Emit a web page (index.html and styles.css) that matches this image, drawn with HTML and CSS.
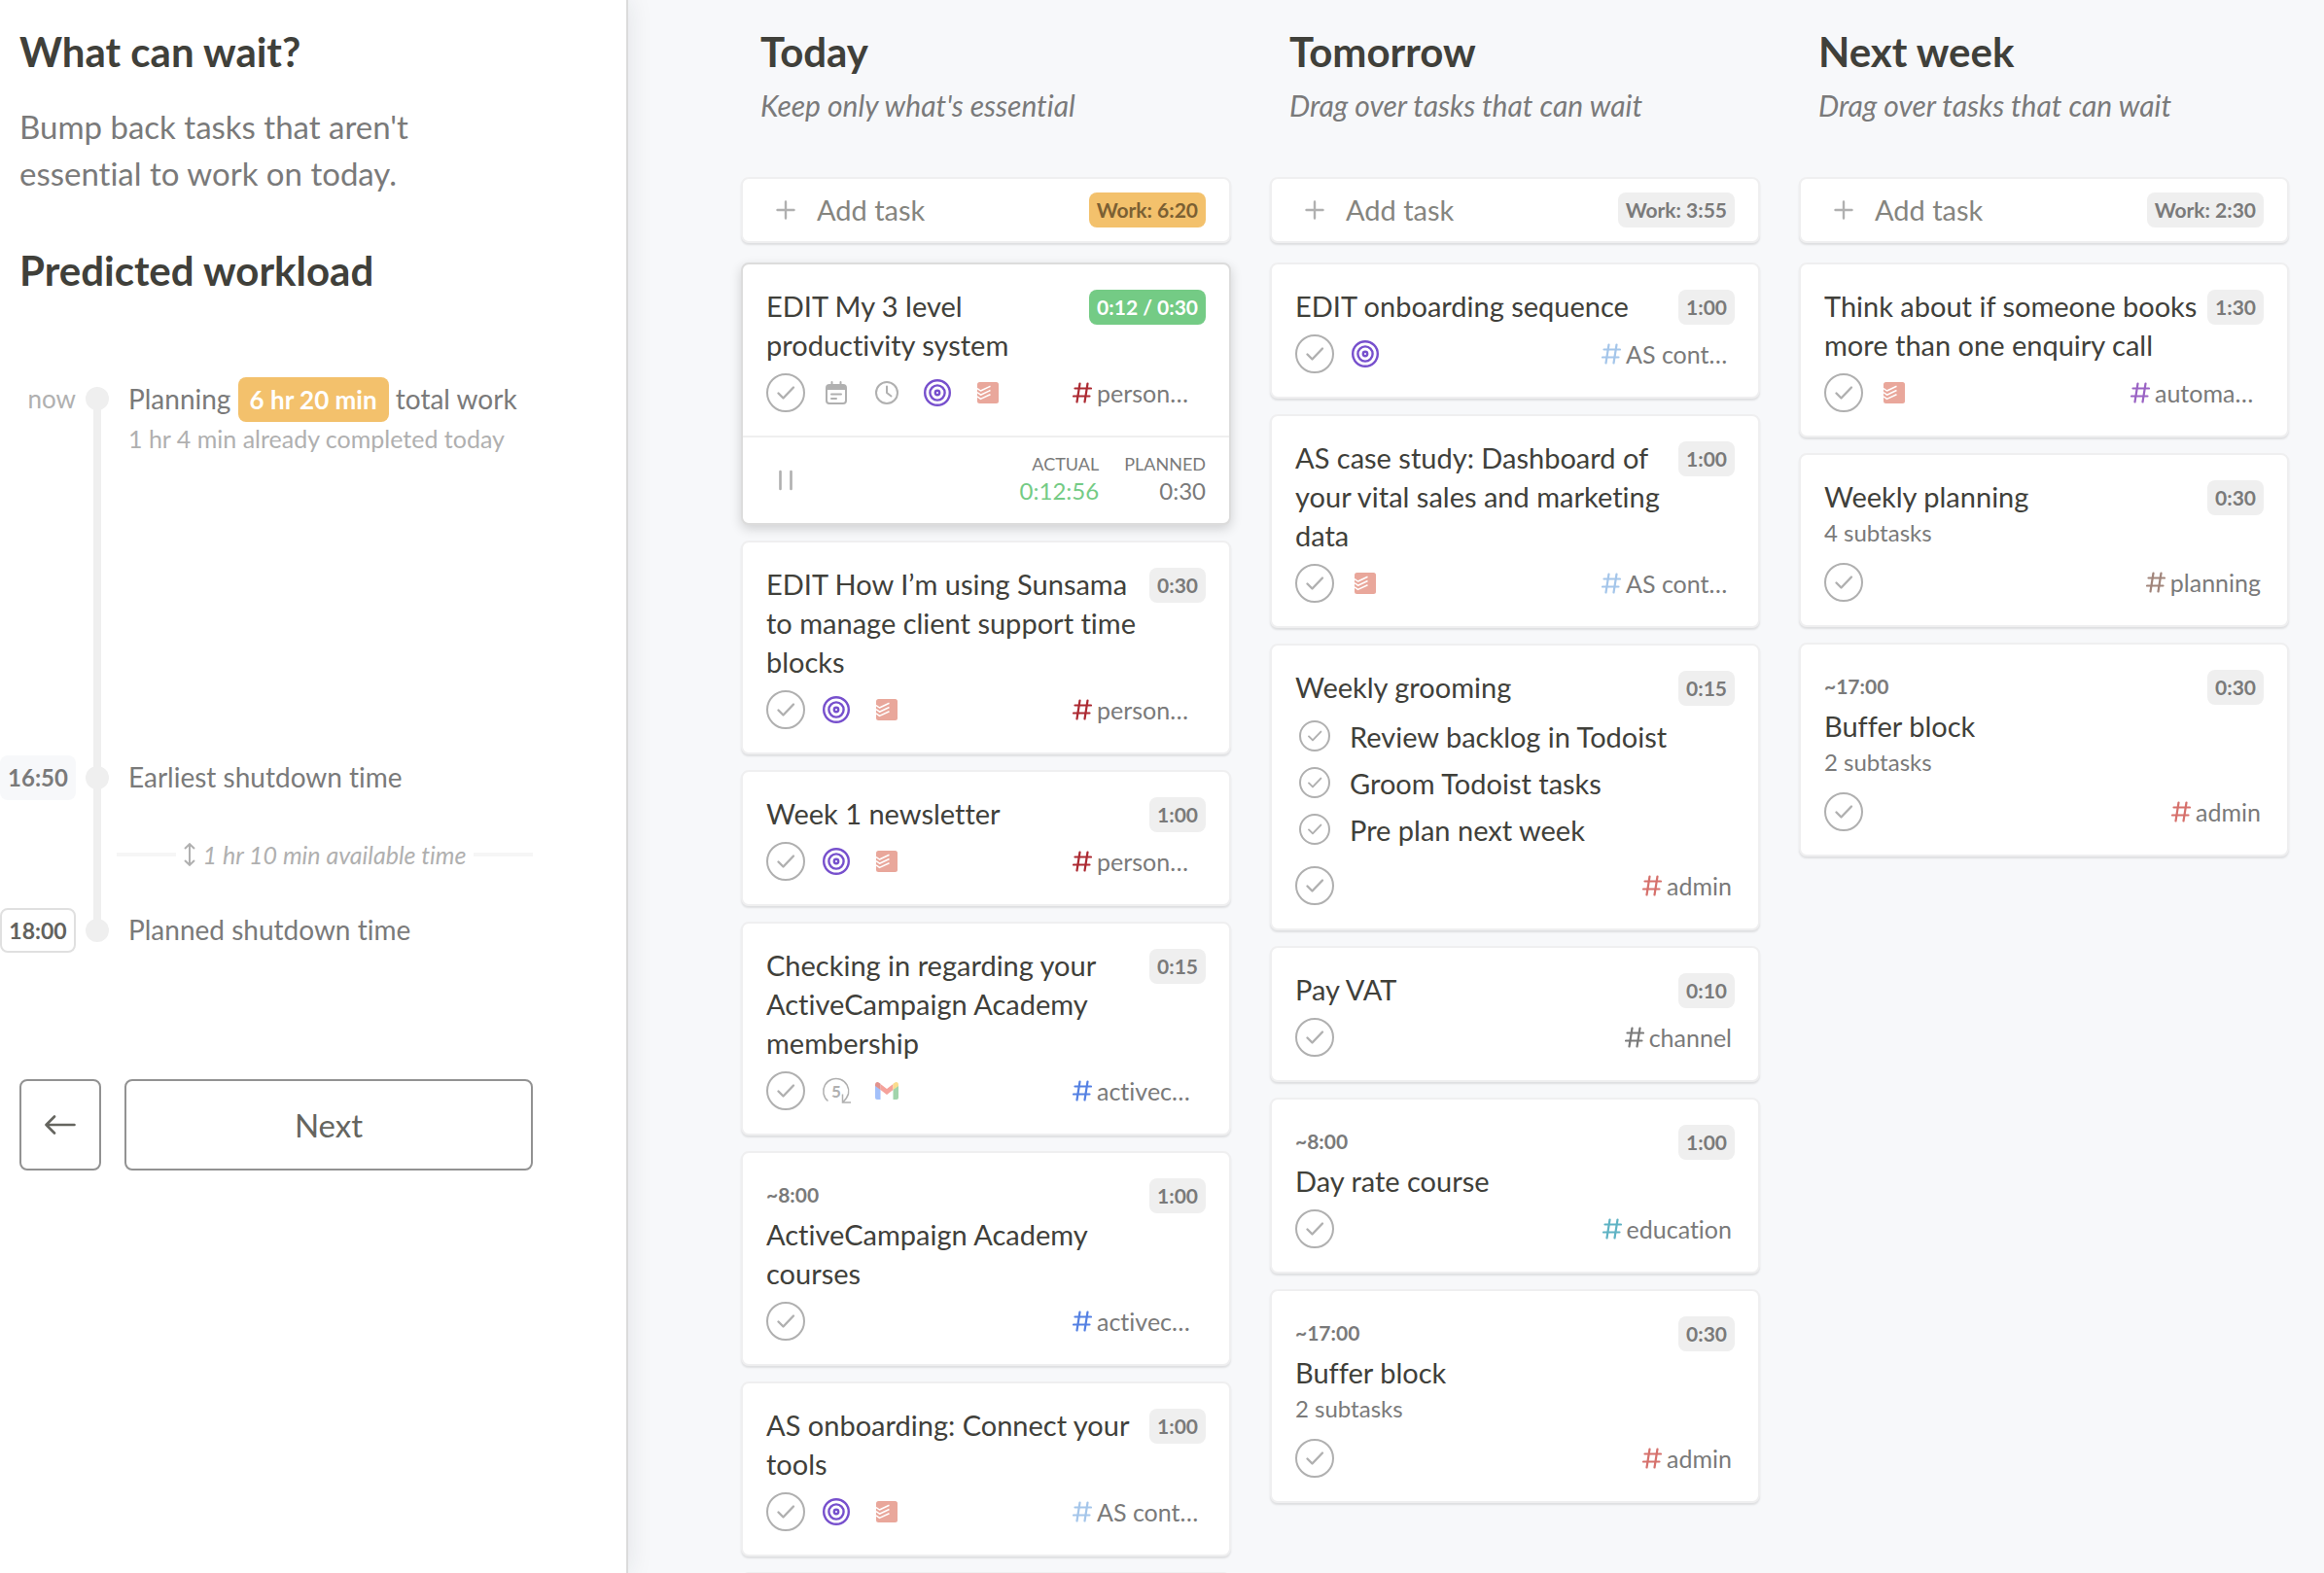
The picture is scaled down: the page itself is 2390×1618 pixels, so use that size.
FILE: index.html
```html
<!DOCTYPE html>
<html lang="en">
<head>
<meta charset="utf-8">
<title>Plan your day</title>
<link rel="stylesheet" href="styles.css">
</head>
<body>
<svg class="sprite" aria-hidden="true">
  <symbol id="i-check" viewBox="0 0 40 40"><path d="M12.500 20.500 17.500 25.500 28 14.500" fill="none" stroke="currentColor" stroke-width="2.400" stroke-linecap="round" stroke-linejoin="round"/></symbol>
  <symbol id="i-calendar" viewBox="0 0 22 24"><path d="M6.500 1v4M15.500 1v4" stroke="currentColor" stroke-width="2" stroke-linecap="round"/><rect x="1" y="4" width="20" height="19" rx="3" fill="none" stroke="currentColor" stroke-width="2"/><path d="M1 6.500Q1 4 3.500 4h15Q21 4 21 6.500V9H1z" fill="currentColor"/><path d="M6 13.500h10M6 18h5" stroke="currentColor" stroke-width="2" stroke-linecap="round"/></symbol>
  <symbol id="i-clock" viewBox="0 0 24 24"><circle cx="12" cy="12" r="11" fill="none" stroke="currentColor" stroke-width="2"/><path d="M12 5.500V12l4.500 3.500" fill="none" stroke="currentColor" stroke-width="2" stroke-linecap="round" stroke-linejoin="round"/></symbol>
  <symbol id="i-target" viewBox="0 0 28 28"><g fill="none" stroke="currentColor"><circle cx="14" cy="14" r="12.800" stroke-width="2.400"/><circle cx="14" cy="14" r="7.600" stroke-width="2.400"/><circle cx="14" cy="14" r="2.200" stroke-width="2.400"/></g></symbol>
  <symbol id="i-todoist" viewBox="0 0 22 22"><rect width="22" height="22" rx="2.500" fill="currentColor"/><g fill="none" stroke="#fff" stroke-width="1.500" stroke-linejoin="round"><path d="M0 6.500 3.500 9 13.500 4.300"/><path d="M0 10.700 3.500 13.200 13.500 8.500"/><path d="M0 14.900 3.500 17.400 13.500 12.700"/></g></symbol>
  <symbol id="i-gmail" viewBox="0 0 24 18"><path d="M0 3.500 5.500 7.500V18H2Q0 18 0 16z" fill="#a3c0fa"/><path d="M24 3.500 18.500 7.500V18H22Q24 18 24 16z" fill="#a1d4ab"/><path d="M5.500 2 12 7 18.500 2V8L12 13 5.500 8z" fill="#f5a29b"/><path d="M0 3Q0 0 2.500 0 3.500 0 5.500 1.800V8L0 4z" fill="#e1928d"/><path d="M24 3Q24 0 21.500 0 20.500 0 18.500 1.800V8L24 4z" fill="#fbdc8d"/></symbol>
  <symbol id="i-rollover" viewBox="0 0 30 30"><path d="M6.500 25.500A13 13 0 1 1 27.500 18Q26.500 22 22 26.500M21.500 18.500V27H30" fill="none" stroke="currentColor" stroke-width="1.500"/></symbol>
  <symbol id="i-hash" viewBox="0 0 20 22"><path d="M7.500 1.500 4.500 20.500M15.500 1.500 12.500 20.500M2.500 6.500H19M1 14.500H17.500" fill="none" stroke="currentColor" stroke-width="2.200" stroke-linecap="round"/></symbol>
  <symbol id="i-plus" viewBox="0 0 20 20"><path d="M10 1.500v17M1.500 10h17" stroke="currentColor" stroke-width="2.400" stroke-linecap="round"/></symbol>
  <symbol id="i-pause" viewBox="0 0 16 24"><path d="M2.500 3v18M13.500 3v18" stroke="currentColor" stroke-width="2.600" stroke-linecap="round"/></symbol>
  <symbol id="i-back" viewBox="0 0 32 20"><path d="M10 1.500 1.500 10l8.500 8.500M1.500 10h29" fill="none" stroke="currentColor" stroke-width="2.600" stroke-linecap="round" stroke-linejoin="round"/></symbol>
  <symbol id="i-updown" viewBox="0 0 12 24"><path d="M6 1.500v21M1 6 6 1.200 11 6M1 18l5 4.800L11 18" fill="none" stroke="currentColor" stroke-width="2"/></symbol>
</svg>

<div class="layout">
  <aside class="sidebar">
    <h1 class="heading">What can wait?</h1>
    <p class="lead">Bump back tasks that aren't<br>essential to work on today.</p>
    <h2 class="heading workload-heading">Predicted workload</h2>

    <ol class="timeline">
      <li class="stop stop-now">
        <span class="stop-time">now</span>
        <span class="dot"></span>
        <div class="stop-text">
          <p class="stop-plan">Planning <strong class="total">6 hr 20 min</strong> total work</p>
          <p class="stop-note">1 hr 4 min already completed today</p>
        </div>
      </li>
      <li class="stop">
        <span class="stop-time time-chip">16:50</span>
        <span class="dot"></span>
        <p class="stop-text stop-line">Earliest shutdown time</p>
      </li>
      <li class="available"><svg class="updown"><use href="#i-updown"/></svg><em>1 hr 10 min available time</em></li>
      <li class="stop">
        <button class="time-button" type="button">18:00</button>
        <span class="dot"></span>
        <p class="stop-text stop-line">Planned shutdown time</p>
      </li>
    </ol>

    <div class="actions">
      <button class="btn btn-back" type="button" aria-label="Back"><svg><use href="#i-back"/></svg></button>
      <button class="btn btn-next" type="button">Next</button>
    </div>
  </aside>

  <main class="board">
    <section class="column">
      <h2 class="heading column-heading">Today</h2>
      <p class="column-hint">Keep only what's essential</p>
      <button class="add-task" type="button"><svg><use href="#i-plus"/></svg><span class="add-label">Add task</span><span class="badge badge-over">Work: 6:20</span></button>

      <div class="cards">
        <article class="card card-active">
          <div class="card-body">
            <div class="card-top"><h3 class="title">EDIT My 3 level productivity system</h3><span class="badge badge-running">0:12 / 0:30</span></div>
            <div class="card-row">
              <label class="check"><input type="checkbox" aria-label="Complete EDIT My 3 level productivity system"><svg><use href="#i-check"/></svg></label>
              <span class="icon"><svg class="calendar"><use href="#i-calendar"/></svg></span>
              <span class="icon"><svg class="clock"><use href="#i-clock"/></svg></span>
              <span class="icon"><svg class="target"><use href="#i-target"/></svg></span>
              <span class="icon"><svg class="todoist"><use href="#i-todoist"/></svg></span>
              <span class="channel clipped"><svg class="hash crimson"><use href="#i-hash"/></svg><span>person…</span></span>
            </div>
          </div>
          <div class="timer">
            <button class="pause" type="button" aria-label="Pause"><svg><use href="#i-pause"/></svg></button>
            <dl class="timer-values">
              <div><dt>ACTUAL</dt><dd class="running">0:12:56</dd></div>
              <div><dt>PLANNED</dt><dd>0:30</dd></div>
            </dl>
          </div>
        </article>

        <article class="card">
          <div class="card-body">
            <div class="card-top"><h3 class="title">EDIT How I’m using Sunsama to manage client support time blocks</h3><span class="badge">0:30</span></div>
            <div class="card-row">
              <label class="check"><input type="checkbox" aria-label="Complete EDIT How I’m using Sunsama"><svg><use href="#i-check"/></svg></label>
              <span class="icon"><svg class="target"><use href="#i-target"/></svg></span>
              <span class="icon"><svg class="todoist"><use href="#i-todoist"/></svg></span>
              <span class="channel clipped"><svg class="hash crimson"><use href="#i-hash"/></svg><span>person…</span></span>
            </div>
          </div>
        </article>

        <article class="card">
          <div class="card-body">
            <div class="card-top"><h3 class="title">Week 1 newsletter</h3><span class="badge">1:00</span></div>
            <div class="card-row">
              <label class="check"><input type="checkbox" aria-label="Complete Week 1 newsletter"><svg><use href="#i-check"/></svg></label>
              <span class="icon"><svg class="target"><use href="#i-target"/></svg></span>
              <span class="icon"><svg class="todoist"><use href="#i-todoist"/></svg></span>
              <span class="channel clipped"><svg class="hash crimson"><use href="#i-hash"/></svg><span>person…</span></span>
            </div>
          </div>
        </article>

        <article class="card">
          <div class="card-body">
            <div class="card-top"><h3 class="title">Checking in regarding your ActiveCampaign Academy membership</h3><span class="badge">0:15</span></div>
            <div class="card-row">
              <label class="check"><input type="checkbox" aria-label="Complete Checking in"><svg><use href="#i-check"/></svg></label>
              <span class="icon rollover"><svg><use href="#i-rollover"/></svg><b>5</b></span>
              <span class="icon"><svg class="gmail"><use href="#i-gmail"/></svg></span>
              <span class="channel clipped"><svg class="hash blue"><use href="#i-hash"/></svg><span>activec…</span></span>
            </div>
          </div>
        </article>

        <article class="card">
          <div class="card-body">
            <div class="card-top"><div class="titles"><p class="start">~8:00</p><h3 class="title">ActiveCampaign Academy courses</h3></div><span class="badge">1:00</span></div>
            <div class="card-row">
              <label class="check"><input type="checkbox" aria-label="Complete ActiveCampaign Academy courses"><svg><use href="#i-check"/></svg></label>
              <span class="channel clipped"><svg class="hash blue"><use href="#i-hash"/></svg><span>activec…</span></span>
            </div>
          </div>
        </article>

        <article class="card">
          <div class="card-body">
            <div class="card-top"><h3 class="title">AS onboarding: Connect your tools</h3><span class="badge">1:00</span></div>
            <div class="card-row">
              <label class="check"><input type="checkbox" aria-label="Complete AS onboarding"><svg><use href="#i-check"/></svg></label>
              <span class="icon"><svg class="target"><use href="#i-target"/></svg></span>
              <span class="icon"><svg class="todoist"><use href="#i-todoist"/></svg></span>
              <span class="channel clipped"><svg class="hash sky"><use href="#i-hash"/></svg><span>AS cont…</span></span>
            </div>
          </div>
        </article>

        <article class="card card-empty"></article>
      </div>
    </section>

    <section class="column">
      <h2 class="heading column-heading">Tomorrow</h2>
      <p class="column-hint">Drag over tasks that can wait</p>
      <button class="add-task" type="button"><svg><use href="#i-plus"/></svg><span class="add-label">Add task</span><span class="badge">Work: 3:55</span></button>

      <div class="cards">
        <article class="card">
          <div class="card-body">
            <div class="card-top"><h3 class="title">EDIT onboarding sequence</h3><span class="badge">1:00</span></div>
            <div class="card-row">
              <label class="check"><input type="checkbox" aria-label="Complete EDIT onboarding sequence"><svg><use href="#i-check"/></svg></label>
              <span class="icon"><svg class="target"><use href="#i-target"/></svg></span>
              <span class="channel clipped"><svg class="hash sky"><use href="#i-hash"/></svg><span>AS cont…</span></span>
            </div>
          </div>
        </article>

        <article class="card">
          <div class="card-body">
            <div class="card-top"><h3 class="title">AS case study: Dashboard of your vital sales and marketing data</h3><span class="badge">1:00</span></div>
            <div class="card-row">
              <label class="check"><input type="checkbox" aria-label="Complete AS case study"><svg><use href="#i-check"/></svg></label>
              <span class="icon"><svg class="todoist"><use href="#i-todoist"/></svg></span>
              <span class="channel clipped"><svg class="hash sky"><use href="#i-hash"/></svg><span>AS cont…</span></span>
            </div>
          </div>
        </article>

        <article class="card">
          <div class="card-body">
            <div class="card-top"><h3 class="title">Weekly grooming</h3><span class="badge">0:15</span></div>
            <ul class="subtasks">
              <li><label class="subtask"><span class="check check-small"><input type="checkbox"><svg><use href="#i-check"/></svg></span><span>Review backlog in Todoist</span></label></li>
              <li><label class="subtask"><span class="check check-small"><input type="checkbox"><svg><use href="#i-check"/></svg></span><span>Groom Todoist tasks</span></label></li>
              <li><label class="subtask"><span class="check check-small"><input type="checkbox"><svg><use href="#i-check"/></svg></span><span>Pre plan next week</span></label></li>
            </ul>
            <div class="card-row">
              <label class="check"><input type="checkbox" aria-label="Complete Weekly grooming"><svg><use href="#i-check"/></svg></label>
              <span class="channel"><svg class="hash coral"><use href="#i-hash"/></svg><span>admin</span></span>
            </div>
          </div>
        </article>

        <article class="card">
          <div class="card-body">
            <div class="card-top"><h3 class="title">Pay VAT</h3><span class="badge">0:10</span></div>
            <div class="card-row">
              <label class="check"><input type="checkbox" aria-label="Complete Pay VAT"><svg><use href="#i-check"/></svg></label>
              <span class="channel"><svg class="hash gray"><use href="#i-hash"/></svg><span>channel</span></span>
            </div>
          </div>
        </article>

        <article class="card">
          <div class="card-body">
            <div class="card-top"><div class="titles"><p class="start">~8:00</p><h3 class="title">Day rate course</h3></div><span class="badge">1:00</span></div>
            <div class="card-row">
              <label class="check"><input type="checkbox" aria-label="Complete Day rate course"><svg><use href="#i-check"/></svg></label>
              <span class="channel"><svg class="hash teal"><use href="#i-hash"/></svg><span>education</span></span>
            </div>
          </div>
        </article>

        <article class="card">
          <div class="card-body">
            <div class="card-top"><div class="titles"><p class="start">~17:00</p><h3 class="title">Buffer block</h3><p class="count">2 subtasks</p></div><span class="badge">0:30</span></div>
            <div class="card-row">
              <label class="check"><input type="checkbox" aria-label="Complete Buffer block"><svg><use href="#i-check"/></svg></label>
              <span class="channel"><svg class="hash coral"><use href="#i-hash"/></svg><span>admin</span></span>
            </div>
          </div>
        </article>
      </div>
    </section>

    <section class="column">
      <h2 class="heading column-heading">Next week</h2>
      <p class="column-hint">Drag over tasks that can wait</p>
      <button class="add-task" type="button"><svg><use href="#i-plus"/></svg><span class="add-label">Add task</span><span class="badge">Work: 2:30</span></button>

      <div class="cards">
        <article class="card">
          <div class="card-body">
            <div class="card-top"><h3 class="title">Think about if someone books more than one enquiry call</h3><span class="badge">1:30</span></div>
            <div class="card-row">
              <label class="check"><input type="checkbox" aria-label="Complete Think about bookings"><svg><use href="#i-check"/></svg></label>
              <span class="icon"><svg class="todoist"><use href="#i-todoist"/></svg></span>
              <span class="channel clipped"><svg class="hash purple"><use href="#i-hash"/></svg><span>automa…</span></span>
            </div>
          </div>
        </article>

        <article class="card">
          <div class="card-body">
            <div class="card-top"><div class="titles"><h3 class="title">Weekly planning</h3><p class="count">4 subtasks</p></div><span class="badge">0:30</span></div>
            <div class="card-row">
              <label class="check"><input type="checkbox" aria-label="Complete Weekly planning"><svg><use href="#i-check"/></svg></label>
              <span class="channel"><svg class="hash brown"><use href="#i-hash"/></svg><span>planning</span></span>
            </div>
          </div>
        </article>

        <article class="card">
          <div class="card-body">
            <div class="card-top"><div class="titles"><p class="start">~17:00</p><h3 class="title">Buffer block</h3><p class="count">2 subtasks</p></div><span class="badge">0:30</span></div>
            <div class="card-row">
              <label class="check"><input type="checkbox" aria-label="Complete Buffer block"><svg><use href="#i-check"/></svg></label>
              <span class="channel"><svg class="hash coral"><use href="#i-hash"/></svg><span>admin</span></span>
            </div>
          </div>
        </article>
      </div>
    </section>
  </main>
</div>
</body>
</html>
```
FILE: styles.css
```css
*, *::before, *::after { box-sizing: border-box; }

body {
  margin: 0;
  background: #f7f8fa;
  color: #7a7a7a;
  font-family: Lato, "Liberation Sans", sans-serif;
  font-size: 28px;
  font-variant-ligatures: no-common-ligatures;
}

h1, h2, h3, p, ol, ul, dl, dd { margin: 0; padding: 0; }
ol, ul { list-style: none; }
button { font-family: inherit; margin: 0; cursor: pointer; }
svg { display: block; }
.sprite { display: none; }

.layout {
  display: flex;
  height: 100vh;
  overflow: hidden;
}

.heading {
  color: #40403a;
  font-size: 42px;
  font-weight: 700;
  line-height: 54px;
}

/* Sidebar */
.sidebar {
  flex: 0 0 646px;
  padding-top: 26px;
  background: #fff;
  border-right: 2px solid #dbdbdb;
  box-shadow: 0 0 24px rgba(30, 35, 60, 0.1);
}

.sidebar .heading, .lead { padding-left: 20px; }
.lead { margin-top: 26px; font-size: 33px; line-height: 48px; }
.workload-heading { margin-top: 49px; }

.timeline { position: relative; margin-top: 82px; }
.timeline::before {
  content: "";
  position: absolute;
  left: 96px;
  top: 23px;
  bottom: 23px;
  width: 8px;
  background: #efefef;
}

.stop {
  display: grid;
  grid-template-columns: 78px 44px 1fr;
  align-items: start;
}
.stop-now { min-height: 390px; }
.stop-time { text-align: right; font-size: 26px; line-height: 46px; color: #b0b0b0; }
.dot {
  justify-self: center;
  width: 24px;
  height: 24px;
  margin-top: 11px;
  border-radius: 50%;
  background: #efefef;
  z-index: 1;
}
.stop-text { padding-left: 10px; }
.stop-plan { line-height: 46px; }
.stop-line { line-height: 44px; }
.stop-note { font-size: 25px; line-height: 34px; color: #b0b0b0; }
.total {
  display: inline-block;
  padding: 0 12px;
  border-radius: 8px;
  background: #f3c16c;
  color: #fff;
  font-size: 26px;
  line-height: 46px;
}
.time-chip {
  border-radius: 8px;
  background: #f7f8fa;
  color: #7a7a7a;
  font-size: 24px;
  font-weight: 700;
  text-align: center;
}
.time-button {
  height: 46px;
  padding: 0;
  border: 2px solid #e0e0e0;
  border-radius: 8px;
  background: #fff;
  color: #62625d;
  font-size: 23px;
  font-weight: 700;
}
.available {
  display: flex;
  align-items: center;
  gap: 8px;
  height: 111px;
  margin: 0 96px 0 120px;
  color: #b0b0b0;
  font-size: 25px;
}
.available::before, .available::after {
  content: "";
  flex: 1;
  height: 4px;
  background: #f6f6f6;
}
.updown { width: 12px; height: 24px; }

.actions { display: flex; gap: 24px; margin: 130px 96px 0 20px; }
.btn {
  height: 94px;
  padding: 0;
  border: 2px solid #929292;
  border-radius: 8px;
  background: #fff;
  color: #65655f;
  font-size: 33px;
}
.btn-back { display: grid; place-items: center; flex: 0 0 84px; }
.btn-back svg { width: 32px; height: 20px; }
.btn-next { flex: 1; }

/* Board */
.board {
  flex: 1;
  display: grid;
  grid-template-columns: repeat(3, minmax(0, 1fr));
  gap: 40px;
  padding: 26px 36px 0 116px;
}
.column-heading { padding-left: 20px; }
.column-hint { margin-top: 8px; padding-left: 20px; font-size: 30px; line-height: 40px; font-style: italic; }

.add-task, .card {
  border: 2px solid #efeff0;
  border-radius: 8px;
  background: #fff;
  box-shadow: 0 2px 2px rgba(0, 0, 0, 0.1);
}
.add-task {
  display: flex;
  align-items: center;
  width: 100%;
  height: 68px;
  margin-top: 54px;
  padding: 0 24px 0 34px;
  color: #b0b0b0;
  font-size: 29px;
}
.add-task svg { width: 20px; height: 20px; }
.add-label { flex: 1; padding: 0 0 2px 22px; text-align: left; color: #85857f; }

.cards { display: flex; flex-direction: column; gap: 16px; margin-top: 20px; }
.card-body { padding: 23px 24px 24px; }
.card-empty { min-height: 140px; }
.card-active { border-color: #dcdcdc; box-shadow: 0 4px 12px rgba(0, 0, 0, 0.16); }

.card-top { display: flex; align-items: flex-start; justify-content: space-between; gap: 4px; }
.title { color: #40403a; font-size: 29px; font-weight: 400; line-height: 40px; }
.start { margin-bottom: 1px; font-size: 21px; font-weight: 700; line-height: 40px; }
.count { margin-bottom: 5px; font-size: 24px; line-height: 34px; }

.badge {
  flex: none;
  margin-top: 3px;
  padding: 0 8px;
  border-radius: 8px;
  background: #efefef;
  color: #7a7a7a;
  font-size: 21px;
  font-weight: 700;
  line-height: 36px;
}
.add-task .badge { margin-top: 0; }
.badge-over { background: #f3c16c; color: #7b6033; }
.card-top .badge-running { background: #74cb85; color: #fff; }

.card-row { display: flex; align-items: center; gap: 12px; margin-top: 9px; }
.check { display: grid; flex: none; width: 40px; height: 40px; color: #b0b0b0; }
.check input {
  grid-area: 1 / 1;
  width: 100%;
  height: 100%;
  margin: 0;
  appearance: none;
  border: 2px solid #b0b0b0;
  border-radius: 50%;
}
.check svg { grid-area: 1 / 1; width: 100%; height: 100%; pointer-events: none; }
.check-small { width: 32px; height: 32px; }

.icon { display: grid; place-items: center; width: 40px; height: 40px; color: #b0b0b0; }
.icon svg, .icon b { grid-area: 1 / 1; }
.calendar { width: 22px; height: 24px; }
.clock { width: 24px; height: 24px; }
.target { width: 28px; height: 28px; color: #7750cd; }
.todoist { width: 22px; height: 22px; color: #e9a79b; }
.gmail { width: 24px; height: 18px; }
.rollover svg { width: 30px; height: 30px; }
.rollover b { font-size: 17px; }

.channel { display: flex; align-items: center; gap: 5px; margin-left: auto; padding-right: 3px; font-size: 25px; line-height: 38px; white-space: nowrap; }
.clipped { width: 137px; padding-right: 0; }
.hash { flex: none; width: 20px; height: 22px; }
.crimson { color: #ac2a32; }
.blue { color: #5581e3; }
.sky { color: #a5c6ea; }
.coral { color: #d6716c; }
.gray { color: #7a7a7a; }
.teal { color: #5fb3c4; }
.purple { color: #9a63c4; }
.brown { color: #a1857b; }

.subtasks { margin: 6px 0 14px; }
.subtask { display: flex; align-items: center; gap: 20px; height: 48px; padding-left: 4px; color: #40403a; font-size: 29px; }

.timer {
  display: flex;
  align-items: center;
  justify-content: space-between;
  height: 90px;
  padding: 0 24px 0 36px;
  border-top: 2px solid #efefef;
}
.pause { padding: 0; border: 0; background: none; color: #b0b0b0; }
.pause svg { width: 16px; height: 24px; }
.timer-values { display: flex; gap: 26px; padding-bottom: 4px; text-align: right; }
.timer-values dt { font-size: 18px; line-height: 26px; }
.timer-values dd { font-size: 24px; line-height: 30px; }
.timer-values .running { color: #74cb85; }
```
